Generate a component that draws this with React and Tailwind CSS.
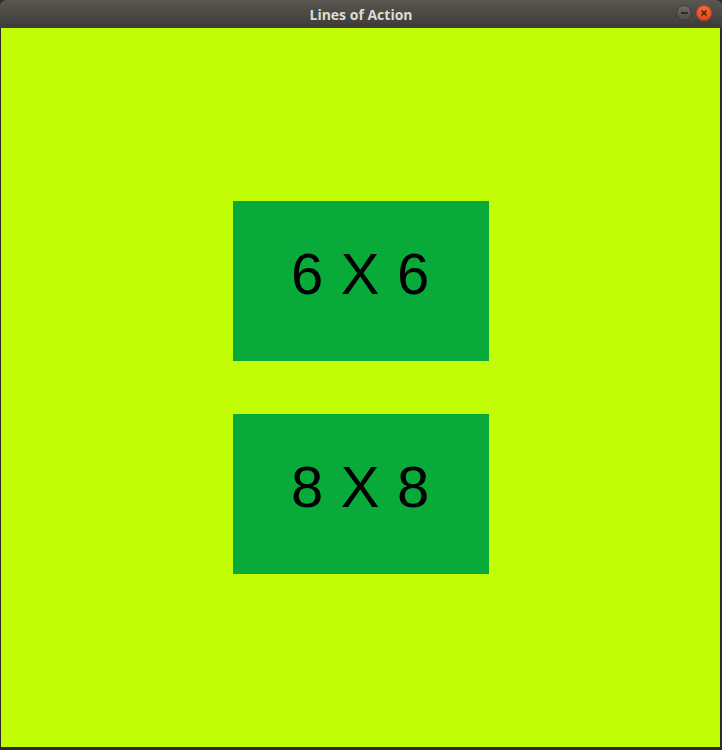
import React from 'react';

const sizes = ['6 X 6', '8 X 8'];

const BoardButton = ({ label }) => (
  <button className="w-[256px] h-[160px] bg-[#08aa3a] flex items-center justify-center pb-[15px]">
    <span className="text-[58px] leading-none tracking-[0.7px] text-black" style={{ fontFamily: '"Liberation Sans", Arial, sans-serif' }}>
      {label}
    </span>
  </button>
);

const App = () => {
  return (
    <div className="w-[722px] h-[750px] flex flex-col bg-[#2b2b2b] overflow-hidden">
      {/* Title bar */}
      <div className="h-[28px] shrink-0 flex items-center justify-center relative bg-gradient-to-b from-[#5a5650] to-[#3d3c38] rounded-t-[6px]">
        <span
          className="text-[14px] font-bold text-[#dfdbd2]"
          style={{ fontFamily: '"Open Sans", "DejaVu Sans", sans-serif' }}
        >
          Lines of Action
        </span>
        <div className="absolute right-[10px] top-[5px] flex gap-[4px]">
          <div className="w-[16px] h-[16px] rounded-full bg-gradient-to-b from-[#6d6b66] to-[#4d4c48] border border-[#3a3935] flex items-center justify-center">
            <div className="w-[7px] h-[1.5px] bg-[#2e2d2a]" />
          </div>
          <div className="w-[16px] h-[16px] rounded-full bg-gradient-to-b from-[#f26b3a] to-[#e0461a] border border-[#b9441d] flex items-center justify-center">
            <svg width="8" height="8" viewBox="0 0 8 8">
              <path d="M1.5 1.5 L6.5 6.5 M6.5 1.5 L1.5 6.5" stroke="#3b1a0c" strokeWidth="1.3" />
            </svg>
          </div>
        </div>
      </div>
      {/* Content */}
      <div className="h-[719px] shrink-0 ml-[1px] mr-[2px] bg-[#c1fd04] flex flex-col items-center pt-[173px] gap-[53px]">
        {sizes.map((s) => (
          <BoardButton key={s} label={s} />
        ))}
      </div>
    </div>
  );
};

export default App;
